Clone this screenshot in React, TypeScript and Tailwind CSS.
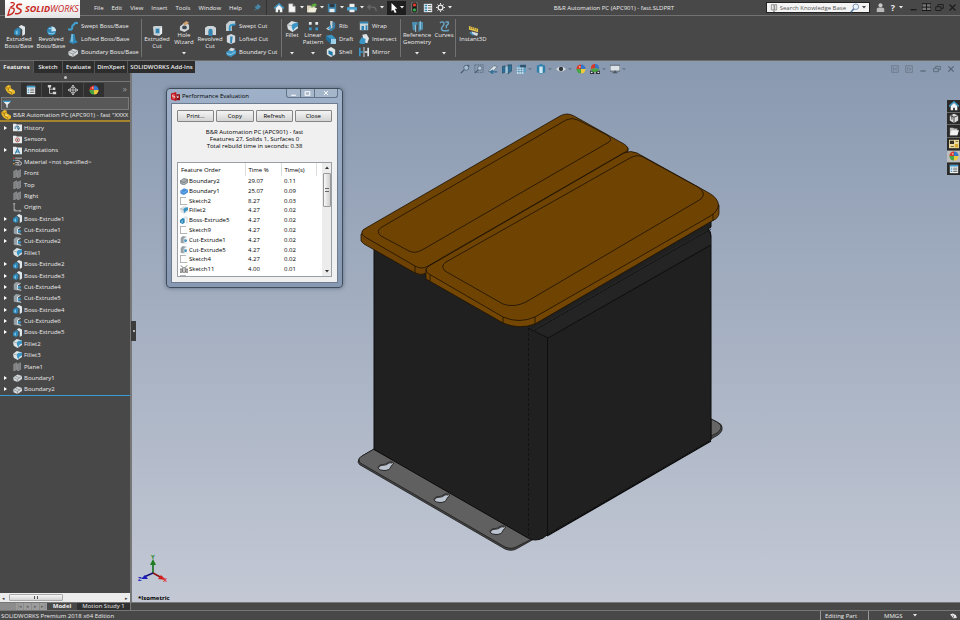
import clsx from "clsx";
import React from "react";

// small icons, all drawn on a 12x12 grid
const ICONS = {
  boss: (
    <>
      <path d="M0 6l4-3 3 1v6l-3 2-4-2z" fill="#2f86b5" />
      <path d="M5 2l3-2 4 2v8l-3 2V5z" fill="#dfe7ea" />
      <path d="M2 7l2-1v4H2z" fill="#7cc4e6" />
    </>
  ),
  revolve: (
    <>
      <circle cx="6" cy="6.500" r="5" fill="#2f86b5" />
      <path d="M6 1.500a5 5 0 0 1 5 5L6 7z" fill="#cfe3ec" />
      <path d="M2.500 8.500q3.500 2 7 0M3 4q3-1 4 1" fill="none" stroke="#8ccbe8" strokeWidth="1.200" />
    </>
  ),
  sweep: (
    <path
      d="M1 10c6 2 3-5 5-5s1-4 5-2.500"
      fill="none"
      stroke="#3f9fd0"
      strokeWidth="2.600"
      strokeLinecap="round"
    />
  ),
  loft: (
    <>
      <path d="M4 0h4l1 7 3 3-6 2-5-2 2-3z" fill="#2f86b5" />
      <path d="M4 0h2v10l-3-1z" fill="#73b9dc" />
    </>
  ),
  boundary: (
    <>
      <path d="M0 6l6-4 6 2v4l-6 4-5-2z" fill="#d4d8da" />
      <path d="M0 6l6 2.500L12 4M6 8.500V12M3 4l6 2.500" fill="none" stroke="#70797d" strokeWidth=".8" />
    </>
  ),
  boundaryGrey: (
    <>
      <path d="M0 6l6-4 6 2v4l-6 4-5-2z" fill="#a9aeb1" stroke="#565e62" strokeWidth=".8" />
      <path d="M0 6l6 2.500L12 4" fill="none" stroke="#565e62" strokeWidth=".8" />
    </>
  ),
  boundaryBlue: (
    <>
      <path d="M0 6l6-4 6 2v4l-6 4-5-2z" fill="#4a90d9" />
      <path d="M0 6l6 2.500L12 4" fill="none" stroke="#8fc0f0" strokeWidth=".8" />
    </>
  ),
  boundaryCut: (
    <>
      <path d="M0 6l6-3 6 1v4l-6 4-5-2z" fill="#3b96c6" />
      <path d="M3 4l3-3 5 1-3 3z" fill="#d6dcde" />
      <path d="M1 8l5 1 5-3" fill="none" stroke="#a6d9ef" />
    </>
  ),
  cut: (
    <>
      <path d="M1 2l2-1h8v8l-3 3-6-1z" fill="#c9d2d6" />
      <path d="M4 4h4v5H4z" fill="#2f86b5" />
      <path d="M9 4l2-2v7l-2 2z" fill="#eef2f3" />
    </>
  ),
  cutTree: (
    <>
      <path d="M1 3l3-3 6 1-3 2v8H4l-3-1z" fill="#98a2a6" />
      <path d="M10 2L6 4v6l5 1" fill="none" stroke="#d9e2e6" strokeWidth="1.300" />
      <circle cx="8.500" cy="7" r="2" fill="#3b96c6" />
    </>
  ),
  hole: (
    <>
      <path d="M1 6l5-4 5 2v5l-5 3-5-2z" fill="#cfd4d6" />
      <ellipse cx="6" cy="7" rx="2.600" ry="2" fill="#3b4a52" />
      <path d="M4 3l4-3 3 2-4 3z" fill="#d0a06c" />
    </>
  ),
  revolvedCut: (
    <>
      <path d="M0 3l3-2h6l3 2v8H8V6H4v5H0z" fill="#cdd5d9" />
      <path d="M4 5q2-2 4 0v7H4z" fill="#2f86b5" />
    </>
  ),
  sweptCut: (
    <>
      <path d="M0 4l4-4h7v4H7v8H0z" fill="#c3cbcf" />
      <path d="M4.500 12V7q0-3 7-3" fill="none" stroke="#2f9ad0" strokeWidth="2.200" />
    </>
  ),
  loftedCut: (
    <>
      <path d="M1 2l5-2 5 2v8l-5 2-5-2z" fill="#d4dadd" />
      <path d="M5 3h3l-1 8H5z" fill="#2f86b5" />
    </>
  ),
  fillet: (
    <>
      <path d="M0 4l5-4 7 2v6l-6 4-5-3z" fill="#dde3e5" />
      <path d="M5 5q1-3 7-3v4q-4 1-5 5-2-3-2-6z" fill="#3b96c6" />
      <path d="M0 4l5 1" stroke="#7d8588" strokeWidth=".7" />
    </>
  ),
  pattern: (
    <>
      <path d="M1 1h3v3H1zM8 1h3v3H8z" fill="#e5eaec" />
      <path d="M1 7h3v3H1zM8 7h3v3H8z" fill="#3b96c6" />
    </>
  ),
  rib: (
    <>
      <path d="M5 0h3v8l-5 3-3-2 5-3z" fill="#c7d0d4" />
      <path d="M6 4v5l-4 1z" fill="#2f9ad0" />
      <path d="M8 1l3 1v6l-4 4H3l5-4z" fill="#3b7fa6" />
    </>
  ),
  draft: (
    <>
      <path d="M0 2l7-1 5 5v5H6z" fill="#3b96c6" />
      <path d="M6 6h6v6H5z" fill="#9fd0e8" />
      <path d="M0 2l6 4v6L0 7z" fill="#246f9a" />
    </>
  ),
  shell: (
    <>
      <path d="M1 3l5-3 5 3v6l-5 3-5-3z" fill="#dfe5e7" />
      <path d="M3 4l5 2v5L3 8z" fill="#2279a8" />
    </>
  ),
  wrap: (
    <>
      <path d="M1 1h10v10H1z" fill="#c9d5db" />
      <path d="M1 1h10v2H1zM3 6h3v5H3zM8 5h2v6H8z" fill="#2f86b5" />
    </>
  ),
  intersect: (
    <>
      <path d="M4 1l5-1 3 5-2 6-4-1z" fill="#dfe5e7" />
      <path d="M0 10l3-6 5 2-1 6H2z" fill="#3b96c6" />
    </>
  ),
  mirror: (
    <>
      <path d="M6 0v12" stroke="#e5eaec" />
      <path d="M0 1h2v4h3v2H2v4H0z" fill="#3b96c6" />
      <path d="M12 1h-2v4H7v2h3v4h2z" fill="#dfe5e7" />
    </>
  ),
  refGeometry: (
    <>
      <path d="M0 1h6v3H4v6H1zM7 1h5v8l-5 3z" fill="#4b8fb3" />
      <path d="M4 4v8M9 0v9" stroke="#a9d2e5" />
    </>
  ),
  curves: (
    <path
      d="M1 2c4-3 6 1 3 4s-1 6 7 4M7 1h3q1 3-2 4v3"
      fill="none"
      stroke="#69a6c6"
      strokeWidth="1.600"
    />
  ),
  instant: (
    <>
      <path d="M1 1l10 3v4L1 5z" fill="#e3c44c" />
      <path d="M3 2v2M5 2.500v2M7 3v2M9 4v2" stroke="#5d501d" strokeWidth=".7" />
      <path d="M4 7l7 2-1 3-6-2z" fill="#d6dde0" />
      <path d="M2 8l4 3" stroke="#3b96c6" strokeWidth="1.500" />
    </>
  ),
  pin: <path d="M6 1l5 4-2 1-2 3-2-1-4 3 3-4-2-2 3-1z" fill="#4788aa" />,
  home: (
    <>
      <path d="M2 6v5h3V8h2v3h3V6L6 2z" fill="#f2f5f6" />
      <path d="M0 6.500L6 1l6 5.500" fill="none" stroke="#3f9fd0" strokeWidth="1.600" />
    </>
  ),
  newDoc: <path d="M2 1h5l3 3v7H2zM7 1v3h3" fill="#f4f4f4" stroke="#999" strokeWidth=".5" />,
  open: (
    <>
      <path d="M0 3h4l1 1h5v7H0z" fill="#d8d3ba" />
      <path d="M3 6h9l-2 5H1z" fill="#f1eedc" />
      <path d="M5 5q0-4 4-4V0l3 2-3 3V3.500Q7 3 7 5z" fill="#5cae3c" />
    </>
  ),
  save: (
    <>
      <path d="M1 1h10v10H1z" fill="#3c84ab" />
      <path d="M3 1h6v4H3z" fill="#2c3b45" />
      <path d="M3 7h6v4H3z" fill="#e7edf0" />
    </>
  ),
  print: (
    <>
      <path d="M3 1h6v4H3z" fill="#f1f1f1" />
      <path d="M0 5h12v4H0z" fill="#4aa3d0" />
      <path d="M3 8h6v3H3z" fill="#f1f1f1" />
    </>
  ),
  undo: <path d="M4 2L1 5l3 3M1 5h6q4 0 4 5" fill="none" stroke="#6a6a6a" strokeWidth="1.500" />,
  cursor: <path d="M3 0l7 7H7l2 4-2 1-2-4-2 2z" fill="#fff" />,
  traffic: (
    <>
      <rect x="3" y="0" width="6" height="12" rx="2" fill="#15181a" stroke="#9a9a8c" strokeWidth=".8" />
      <circle cx="6" cy="3.200" r="1.800" fill="#e03b2d" />
      <circle cx="6" cy="8.600" r="1.800" fill="#38a648" />
    </>
  ),
  options: (
    <>
      <path d="M1 1h10v10H1z" fill="#e7ecee" />
      <path d="M2 3h3M2 6h3M2 9h3" stroke="#2f86b5" strokeWidth="1.600" />
      <path d="M6 3h4M6 6h4M6 9h4" stroke="#555" />
    </>
  ),
  gear: (
    <>
      <circle cx="6" cy="6" r="3.200" fill="none" stroke="#e8e8e8" strokeWidth="1.800" />
      <path
        d="M6 0v2M6 10v2M0 6h2M10 6h2M2 2l1.300 1.300M8.700 8.700L10 10M10 2L8.700 3.300M3.300 8.700L2 10"
        stroke="#e8e8e8"
        strokeWidth="1.300"
      />
    </>
  ),
  doc: (
    <>
      <path d="M2 1h4v8H2zM7 1h3v8H7z" fill="#e8e8e8" stroke="#555" strokeWidth=".8" />
      <path d="M4 10h4l-2 2z" fill="#555" />
    </>
  ),
  zoom: (
    <>
      <circle cx="7" cy="4.500" r="3.300" fill="#eef5fb" stroke="#6285a8" />
      <path d="M4.500 7L1 11" stroke="#51749a" strokeWidth="1.800" />
    </>
  ),
  user: (
    <>
      <circle cx="6" cy="3" r="2.700" fill="#c9c9c9" />
      <path d="M1 12V8q0-2 3-2h4q3 0 3 2v4z" fill="#b9b9b9" />
    </>
  ),
  zoomFit: (
    <>
      <circle cx="7.500" cy="4.500" r="3" fill="#a9bed0" stroke="#4a6276" />
      <path d="M5 7L1 11M9 1l2 2" stroke="#465c6e" strokeWidth="1.500" />
    </>
  ),
  zoomArea: (
    <>
      <path d="M1 1h10v9H1z" fill="none" stroke="#53697c" strokeDasharray="2 1" />
      <circle cx="7" cy="5" r="2.600" fill="#b8cad8" stroke="#53697c" />
      <path d="M5 7l-4 4" stroke="#465c6e" strokeWidth="1.500" />
    </>
  ),
  prevView: (
    <>
      <path d="M0 9l7-7 4 1-4 5z" fill="#d8e0e6" stroke="#4c6274" strokeWidth=".7" />
      <path d="M2 9.500h9M3 9.500l3-2.500M3 9.500L6 12" stroke="#2e6c95" strokeWidth="1.400" fill="none" />
    </>
  ),
  section: (
    <>
      <path d="M0 3l4-1v8l-4 1zM7 1h5v7l-5 4z" fill="#2f6f96" stroke="#27424f" strokeWidth=".6" />
      <path d="M4 3h3v8H4z" fill="#9fc3d8" />
    </>
  ),
  orient: (
    <>
      <path d="M1 3l3-2h8v8l-3 3H1z" fill="#5f9cc0" />
      <path d="M1 4h8v8H1z" fill="#c6dbe7" />
      <path d="M1 6.500h8M1 9h8M3.500 4v8M6.500 4v8" stroke="#3d7da3" strokeWidth=".6" />
      <path d="M5 1h7v3H5z" fill="#31536a" />
    </>
  ),
  display: (
    <>
      <path d="M1 2l5-2 5 2v8l-5 2-5-2z" fill="#2f7fab" />
      <path d="M4 3h4v8H4z" fill="#d1e7f1" />
    </>
  ),
  eye: (
    <>
      <path d="M0 6q6-6 12 0-6 6-12 0z" fill="#d8dde1" />
      <circle cx="6" cy="6" r="2.600" fill="#30373c" />
    </>
  ),
  ball: (
    <>
      <path d="M6 6V.5A5.500 5.500 0 0 0 .5 6z" fill="#d9392b" />
      <path d="M6 6V.5A5.500 5.500 0 0 1 11.500 6z" fill="#3476c8" />
      <path d="M6 6H.5A5.500 5.500 0 0 0 6 11.500z" fill="#4aa544" />
      <path d="M6 6h5.500A5.500 5.500 0 0 1 6 11.500z" fill="#efc93c" />
      <circle cx="4.500" cy="3.500" r="1" fill="#fff" opacity=".6" />
    </>
  ),
  scene: (
    <>
      <path d="M0 8h12v4H0z" fill="#29323a" />
      <path d="M1 10h2M5 10.500h2M9 10h2" stroke="#eee" strokeWidth="1.500" />
      <path d="M6 5V0Q1 0 1 6z" fill="#d9392b" />
      <path d="M6 5V0q5 0 5 6z" fill="#3476c8" />
      <path d="M1 6l5-1 5 1q-2 4-5 4T1 6z" fill="#4aa544" />
    </>
  ),
  monitor: (
    <>
      <path d="M0 1.500h12v7H0z" fill="#dce3e8" stroke="#4c565e" />
      <path d="M5 8h2v2h2v1H3v-1h2z" fill="#4c565e" />
    </>
  ),
  part: (
    <>
      <path d="M0 3l4-3 3 1v3l5 3v3l-4 2-5-3-2-3z" fill="#e9b82c" />
      <path d="M0 3l4 1v3l4 2v3M4 4l3-2" fill="none" stroke="#94690c" strokeWidth=".8" />
      <path d="M5 6l3 1" stroke="#fff0a8" />
    </>
  ),
  list: (
    <>
      <path d="M1 1h10v10H1z" fill="#eef2f4" />
      <path d="M1 1h10v2H1z" fill="#3b96c6" />
      <path d="M2 5h2M2 7h2M2 9h2" stroke="#2f86b5" />
      <path d="M5 5h5M5 7h5M5 9h5" stroke="#444" strokeWidth=".8" />
    </>
  ),
  config: (
    <>
      <path d="M3 1v9h4M3 5h4" fill="none" stroke="#d5d5d5" />
      <path d="M1 0h4v3H1zM7 3h3v3H7zM7 8h4v3H7z" fill="#d5d5d5" />
    </>
  ),
  target: (
    <>
      <circle cx="6" cy="6" r="3.500" fill="none" stroke="#c8c8c8" />
      <path
        d="M6 0v12M0 6h12M4.500 2L6 0l1.500 2M4.500 10L6 12l1.500-2M2 4.500L0 6l2 1.500M10 4.500L12 6l-2 1.500"
        fill="none"
        stroke="#c8c8c8"
      />
    </>
  ),
  filter: (
    <>
      <path d="M0 2h12L7 7v5l-2-1V7z" fill="#e8eef1" />
      <path d="M0 1h12v2H0z" fill="#3f9fd0" />
    </>
  ),
  history: (
    <>
      <path d="M0 1h4l1 1h7v9H0z" fill="#e6e9ea" />
      <path d="M3 8a2.800 2.800 0 1 1 3 1.500M5.500 4v3h3" fill="none" stroke="#2f6f96" strokeWidth="1.200" />
    </>
  ),
  sensors: (
    <>
      <path d="M0 1h4l1 1h7v9H0z" fill="#e6e9ea" />
      <circle cx="6" cy="6.500" r="2.600" fill="none" stroke="#b23b31" />
      <circle cx="6" cy="6.500" r="1" fill="#333" />
    </>
  ),
  annotations: (
    <>
      <path d="M0 1h4l1 1h7v9H0z" fill="#e6e9ea" />
      <path d="M3 10l3-6 3 6M4 8h4" fill="none" stroke="#2c7fae" strokeWidth="1.400" />
    </>
  ),
  material: (
    <>
      <path d="M3 1.500h9M3 4.500h6M3 7.500h4M3 10.500h5" stroke="#e0e0e0" />
      <path d="M0 1.500h2" stroke="#d9392b" strokeWidth="1.500" />
      <path d="M0 4.500h2" stroke="#3b96c6" strokeWidth="1.500" />
      <path d="M0 9h2" stroke="#e0b43b" strokeWidth="1.500" />
      <circle cx="9" cy="8.500" r="2.400" fill="#55595c" stroke="#d8d8d8" />
    </>
  ),
  plane: (
    <path d="M1 3l4-2v9l-4 2zM6 3l4-2v9l-4 2z" fill="#7d7f80" stroke="#a5a7a8" strokeWidth=".7" />
  ),
  origin: <path d="M0 1h3M1.500 1v9.500H11M9.500 9v3M2 8l2 2" fill="none" stroke="#b9b9b9" strokeWidth="1.200" />,
  sketch: <path d="M11 11.500H.5V.5H9" fill="none" stroke="#7a7a7a" />,
  sketchMulti: (
    <>
      <path d="M0 11V6h3v5zM4 11V4h4v7zM9 11V6h3v5z" fill="#d9d9d9" stroke="#444" strokeWidth=".9" />
      <path d="M1 1l3 2M8 3l3-2" stroke="#444" />
    </>
  ),
  solidworks: (
    <>
      <path d="M0 2l7-2v12l-7-2z" fill="#c4161c" />
      <path d="M7 3h5v8H7z" fill="#8e1014" />
      <path d="M5 4H2v2h3v2H2M8 5l1 3 1-3" fill="none" stroke="#fff" strokeWidth=".9" />
    </>
  ),
  cube: (
    <>
      <path d="M1 3l5-2 5 2v6l-5 3-5-3z" fill="#dadada" />
      <path d="M1 3l5 2 5-2M6 5v7M3.500 2v6" fill="none" stroke="#333" />
    </>
  ),
  folder: (
    <>
      <path d="M1 2h4l1 1h4v8H1z" fill="#bcbcbc" />
      <path d="M3 5h9l-2 6H1z" fill="#f2f2f2" />
    </>
  ),
  palette: (
    <>
      <path d="M0 1h12v10H0z" fill="#ead9a0" />
      <path d="M1 2h5v4H1z" fill="#332f22" />
      <path d="M7 6h4v4H7z" fill="#d9a72a" />
      <path d="M2 9h4M8 3h3" stroke="#6b5a24" />
    </>
  ),
  collapseL: <path d="M1 1h10v10H1zM4 3v6M9 4L6 6l3 2" fill="none" stroke="#62707f" />,
  collapseR: <path d="M1 1h10v10H1zM4 3v6M6 4l3 2-3 2" fill="none" stroke="#62707f" />,
  minimize: <path d="M2 9h8" stroke="currentColor" strokeWidth="1.800" />,
  restore: <path d="M1 5h7v5H1zM4 5V2h7v5H8" fill="none" stroke="currentColor" strokeWidth="1.200" />,
  tile: <path d="M0 1h12v9H0zM6 1v9M0 5.500h12" fill="#777" stroke="#111" strokeWidth="1.200" />,
  maximize: <path d="M2 3h8v6H2z" fill="none" stroke="currentColor" strokeWidth="1.800" />,
  close: <path d="M2 2l8 8M10 2l-8 8" stroke="currentColor" strokeWidth="1.800" />,
  tag: <path d="M0 4l5 6 2-1-3-6zM4 2l6 3 2 5-6 1z" fill="#e5e5e5" />,
};

type IconName = keyof typeof ICONS;

const Icon = ({ name, className = "size-[10px]" }: { name: IconName; className?: string }) => (
  <svg viewBox="0 0 12 12" className={clsx("shrink-0", className)} aria-hidden="true">
    {ICONS[name]}
  </svg>
);

const Caret = () => (
  <svg viewBox="0 0 4 3" className="h-[3px] w-[4px] shrink-0" aria-hidden="true">
    <path d="M0 0h4L2 2.500z" fill="currentColor" />
  </svg>
);

const Separator = () => <div className="my-[3px] w-px shrink-0 bg-[#727272]" />;

type BigToolProps = { icon: IconName; lines: string[]; className: string; menu?: boolean };

const BigTool = ({ icon, lines, className, menu }: BigToolProps) => (
  <button
    className={clsx(
      "flex shrink-0 flex-col items-center leading-[7px]",
      menu ? "pt-[5px]" : "pt-[9px]",
      className,
    )}
  >
    <Icon name={icon} className="size-[11px]" />
    {lines.map((line) => (
      <span key={line} className="whitespace-nowrap">
        {line}
      </span>
    ))}
    {menu && (
      <span className="mt-auto pb-[5px]">
        <Caret />
      </span>
    )}
  </button>
);

const ToolList = ({ items, className }: { items: [IconName, string][]; className: string }) => (
  <div className={clsx("grid shrink-0 grid-rows-3 pt-[3px] pb-px", className)}>
    {items.map(([icon, label]) => (
      <button key={label} className="flex items-center gap-[3px] whitespace-nowrap">
        <Icon name={icon} />
        {label}
      </button>
    ))}
  </div>
);

const MENUS = ["File", "Edit", "View", "Insert", "Tools", "Window", "Help"];

const QUICK: { icon: IconName; menu?: boolean }[] = [
  { icon: "home" },
  { icon: "newDoc", menu: true },
  { icon: "open", menu: true },
  { icon: "save", menu: true },
  { icon: "print", menu: true },
  { icon: "undo", menu: true },
];

const TitleBar = () => (
  <header className="flex h-[16px] items-center border-b border-[#727272]">
    <div className="relative z-10 ml-[5px] flex h-[18px] w-[75px] shrink-0 items-center gap-[2px] self-start bg-linear-to-b from-white to-[#e4e4e4] pl-[2px] text-[9px] text-[#c8281f] italic">
      <svg viewBox="0 0 18 18" className="size-[16px] shrink-0" aria-hidden="true">
        <path
          d="M4 2q5-1 4 2-1 2-4 3M3 8q6-1 5 3-1 4-7 5l2-7"
          fill="none"
          stroke="#c8281f"
          strokeWidth="1.500"
        />
        <path d="M17 4q-6-1-6 2 0 2 3 3t1 4q-2 2-6 1" fill="none" stroke="#c8281f" strokeWidth="1.800" />
      </svg>
      <span>
        <b>SOLID</b>WORKS
      </span>
    </div>
    <nav className="flex items-center gap-[8px] pl-[14px]">
      {MENUS.map((menu) => (
        <button key={menu}>{menu}</button>
      ))}
      <button aria-label="Pin menu" className="pr-[2px] pl-[3px]">
        <Icon name="pin" className="size-[9px]" />
      </button>
    </nav>
    <div className="ml-[2px] flex h-full items-center gap-[3px] border-l border-[#333] pl-[7px]">
      {QUICK.map(({ icon, menu }) => (
        <button key={icon} aria-label={icon} className="flex items-center gap-[3px]">
          <Icon name={icon} />
          {menu && <Caret />}
        </button>
      ))}
      <button aria-label="Select" className="flex h-[14px] items-center gap-px bg-[#1e1e1e] px-[2px]">
        <Icon name="cursor" />
        <Caret />
      </button>
      <button aria-label="Rebuild">
        <Icon name="traffic" className="size-[11px]" />
      </button>
      <button aria-label="File properties">
        <Icon name="options" />
      </button>
      <button aria-label="Options" className="flex items-center gap-[3px]">
        <Icon name="gear" className="size-[9px]" />
        <Caret />
      </button>
    </div>
    <h1 className="flex-1 pl-[10px] text-center whitespace-pre">B&amp;R Automation PC (APC901) - fast.SLDPRT</h1>
    <div className="ml-auto flex items-center gap-[6px] pr-[3px]">
      <div className="flex h-[11px] w-[104px] items-center border border-[#222] bg-[#f4f4f4] px-[3px] text-[#444]">
        <Icon name="doc" className="size-[8px]" />
        <input
          aria-label="Search Knowledge Base"
          placeholder="Search Knowledge Base"
          className="min-w-0 flex-1 pl-[2px] placeholder:text-[#555]"
        />
        <Icon name="zoom" />
        <span className="pl-[2px]">
          <Caret />
        </span>
      </div>
      <button aria-label="Log in">
        <Icon name="user" className="size-[9px]" />
      </button>
      <button aria-label="Help" className="flex items-center gap-[4px] text-[9px] font-bold">
        ?<Caret />
      </button>
      <div className="flex gap-[4px] text-[#1c1c1c]">
        {(["minimize", "tile", "restore", "close"] as IconName[]).map((icon) => (
          <button key={icon} aria-label={icon}>
            <Icon name={icon} className="size-[9px]" />
          </button>
        ))}
      </div>
    </div>
  </header>
);

const Ribbon = () => (
  <div className="flex h-[45px] border-b border-[#6c6c6c] pl-[3px]">
    <BigTool icon="boss" lines={["Extruded", "Boss/Base"]} className="w-[32px]" />
    <BigTool icon="revolve" lines={["Revolved", "Boss/Base"]} className="w-[32px]" />
    <ToolList
      className="w-[74px] pl-[1px]"
      items={[
        ["sweep", "Swept Boss/Base"],
        ["loft", "Lofted Boss/Base"],
        ["boundary", "Boundary Boss/Base"],
      ]}
    />
    <Separator />
    <BigTool icon="cut" lines={["Extruded", "Cut"]} className="w-[30px]" />
    <BigTool icon="hole" lines={["Hole", "Wizard"]} className="w-[24px]" menu />
    <BigTool icon="revolvedCut" lines={["Revolved", "Cut"]} className="w-[28px]" />
    <ToolList
      className="w-[57px] pl-[2px]"
      items={[
        ["sweptCut", "Swept Cut"],
        ["loftedCut", "Lofted Cut"],
        ["boundaryCut", "Boundary Cut"],
      ]}
    />
    <Separator />
    <BigTool icon="fillet" lines={["Fillet"]} className="w-[20px]" menu />
    <BigTool icon="pattern" lines={["Linear", "Pattern"]} className="w-[22px]" menu />
    <ToolList
      className="w-[33px] pl-[2px]"
      items={[
        ["rib", "Rib"],
        ["draft", "Draft"],
        ["shell", "Shell"],
      ]}
    />
    <ToolList
      className="w-[43px] pl-[2px]"
      items={[
        ["wrap", "Wrap"],
        ["intersect", "Intersect"],
        ["mirror", "Mirror"],
      ]}
    />
    <Separator />
    <BigTool icon="refGeometry" lines={["Reference", "Geometry"]} className="w-[32px]" menu />
    <BigTool icon="curves" lines={["Curves"]} className="w-[22px]" menu />
    <Separator />
    <BigTool icon="instant" lines={["Instant3D"]} className="w-[34px]" />
  </div>
);

const VIEW_TOOLS: { icon: IconName; menu?: boolean }[] = [
  { icon: "zoomFit" },
  { icon: "zoomArea" },
  { icon: "prevView" },
  { icon: "section" },
  { icon: "orient", menu: true },
  { icon: "display", menu: true },
  { icon: "eye", menu: true },
  { icon: "ball" },
  { icon: "scene", menu: true },
  { icon: "monitor", menu: true },
];

const CommandTabs = () => (
  <div className="flex h-[12px] items-start font-semibold">
    <div className="flex h-[12px] gap-px bg-[#555]">
      <button className="w-[33px] bg-[#484848] font-bold">Features</button>
      <button className="w-[28px] bg-[#2d2d2d]">Sketch</button>
      <button className="w-[31px] bg-[#2d2d2d]">Evaluate</button>
      <button className="w-[32px] bg-[#2d2d2d]">DimXpert</button>
      <button className="w-[67px] bg-[#2d2d2d]">SOLIDWORKS Add-Ins</button>
    </div>
    <div className="flex flex-1 items-center justify-center gap-[4px] pt-[3px] text-[#6d7c8e]">
      {VIEW_TOOLS.map(({ icon, menu }) => (
        <button key={icon} aria-label={icon} className="flex items-center gap-[2px]">
          <Icon name={icon} />
          {menu && <Caret />}
        </button>
      ))}
    </div>
    <div className="flex gap-[6px] pt-[4px] pr-[5px] text-[#566474]">
      {(["collapseL", "collapseR", "minimize", "restore", "close"] as IconName[]).map((icon) => (
        <button key={icon} aria-label={icon}>
          <Icon name={icon} className="size-[8px]" />
        </button>
      ))}
    </div>
  </div>
);

const TREE: { icon: IconName; label: string; open?: boolean }[] = [
  { icon: "history", label: "History", open: true },
  { icon: "sensors", label: "Sensors" },
  { icon: "annotations", label: "Annotations", open: true },
  { icon: "material", label: "Material <not specified>" },
  { icon: "plane", label: "Front" },
  { icon: "plane", label: "Top" },
  { icon: "plane", label: "Right" },
  { icon: "origin", label: "Origin" },
  { icon: "boss", label: "Boss-Extrude1", open: true },
  { icon: "cutTree", label: "Cut-Extrude1", open: true },
  { icon: "cutTree", label: "Cut-Extrude2", open: true },
  { icon: "fillet", label: "Fillet1" },
  { icon: "boss", label: "Boss-Extrude2", open: true },
  { icon: "boss", label: "Boss-Extrude3", open: true },
  { icon: "cutTree", label: "Cut-Extrude4", open: true },
  { icon: "cutTree", label: "Cut-Extrude5", open: true },
  { icon: "boss", label: "Boss-Extrude4", open: true },
  { icon: "cutTree", label: "Cut-Extrude6", open: true },
  { icon: "boss", label: "Boss-Extrude5", open: true },
  { icon: "fillet", label: "Fillet2" },
  { icon: "fillet", label: "Fillet3" },
  { icon: "plane", label: "Plane1" },
  { icon: "boundary", label: "Boundary1", open: true },
  { icon: "boundary", label: "Boundary2", open: true },
];

const FeatureTree = () => (
  <aside className="relative flex w-[132px] shrink-0 flex-col border-r-2 border-[#777] bg-[#484848]">
    <div className="flex h-[9px] items-center justify-center border-b border-[#777]">
      <span className="size-[3px] rounded-full bg-[#c4c4c4]" />
    </div>
    <div className="flex h-[15px] shrink-0 items-stretch gap-px pt-px">
      {(["part", "list", "config", "target", "ball"] as IconName[]).map((icon, i) => (
        <button
          key={icon}
          aria-label={icon}
          className={clsx("flex w-[20px] items-center justify-center", i > 0 && "bg-[#303030]")}
        >
          <Icon name={icon} />
        </button>
      ))}
      <span className="ml-auto pr-[3px] text-[9px] leading-[12px] text-[#999]">»</span>
    </div>
    <label className="mx-px flex h-[13px] shrink-0 items-center border border-[#7c7c7c] bg-[#585858] pl-px">
      <Icon name="filter" className="size-[8px]" />
      <input aria-label="Filter features" className="min-w-0 flex-1" />
    </label>
    <div className="flex h-[12px] shrink-0 items-center gap-[2px] overflow-hidden border-b-2 border-[#a5842f] pl-[1px] whitespace-nowrap">
      <Icon name="part" />
      B&amp;R Automation PC (APC901) - fast "XXXX
    </div>
    <ul className="grid h-[273px] shrink-0 auto-rows-fr">
      {TREE.map(({ icon, label, open }) => (
        <li key={label} className="flex items-center whitespace-nowrap">
          <span className="flex w-[13px] shrink-0 pl-[4px]">
            {open && (
              <svg viewBox="0 0 3 4" className="h-[4px] w-[3px]" aria-hidden="true">
                <path d="M0 0l3 2-3 2z" fill="#fff" />
              </svg>
            )}
          </span>
          <Icon name={icon} className="size-[9px]" />
          <span className="pl-[2px]">{label}</span>
        </li>
      ))}
    </ul>
    <div className="h-px shrink-0 bg-[#3a9ad4]" />
    <div className="mt-auto flex h-[9px] shrink-0 items-center justify-between bg-[#ececec] px-[2px] text-[5px] text-[#444]">
      <span>◂</span>
      <div className="mr-auto ml-[4px] flex h-[7px] w-[54px] items-center justify-center rounded-[1px] border border-[#aaa] bg-linear-to-b from-[#f7f7f7] to-[#d2d2d2]">
        <span className="h-[3px] w-[4px] border-x border-[#555]" />
      </div>
      <span>▸</span>
    </div>
    {/* splitter handle */}
    <div className="absolute top-[248px] -right-[6px] z-10 flex h-[20px] w-[5px] items-center justify-center bg-[#3c3c3c]">
      <span className="size-[2px] rounded-full bg-[#ddd]" />
    </div>
  </aside>
);

const Keyhole = ({ x, y }: { x: number; y: number }) => (
  <g transform={`translate(${x} ${y})`}>
    <path
      d="M-7 0q0-3 5-3.500q3 0 4-1.500q2-1.500 5-1q3 1 1 2.500q-2 1-2 2q-1 4-7 4q-5 0-6-2.500z"
      fill="#bcc4d0"
      stroke="#1a1a1a"
      strokeWidth=".9"
    />
    <path d="M-6.500-.5q1-2.500 5-2.300q3 0 4-1.500q2-1.500 5-.7" fill="none" stroke="#3a3a3a" strokeWidth="1.300" />
  </g>
);

const Model = () => (
  <svg viewBox="132 73 828 529" className="min-h-0 min-w-0 flex-1" role="img" aria-label="Isometric part view">
    {/* mounting flanges */}
    <g stroke="#1b1b1b" strokeWidth=".8">
      <path d="M711 419l6 3q5 2 5 5v3q-1 3-4 5l-7 4z" fill="#4a4a4a" />
      <path d="M711 419l6 3q5 3 4 6q-1 3-4 5l-6 3z" fill="#666" />
      <path d="M374 449l-12 7q-4 3-4 6q1 3 4 4l143 83q7 3 13-1l16-9z" fill="#474747" />
      <path d="M374 449l-12 7q-4 2-3 4q0 3 3 4l143 83q7 3 13-1l16-8z" fill="#606060" />
    </g>
    <Keyhole x={385} y={468} />
    <Keyhole x={441} y={500} />
    <Keyhole x={497} y={532} />
    {/* housing */}
    <path
      d="M374 240V449.500L528 538q7 4 15 0l4-3L711 440V236q0-5-3-7l3-2v-12L560 230z"
      fill="#202020"
      stroke="#0c0c0c"
    />
    <path d="M530 330L706 229q4 2 5 15L548 338z" fill="#242424" />
    <g fill="none" stroke="#0a0a0a" strokeWidth=".8">
      <path d="M547.500 338V535" />
      <path d="M528.500 328V538" strokeWidth=".6" strokeDasharray="3 2" />
      <path d="M528 328l20 10L711 245" />
      <path d="M535 330L711 229" strokeDasharray="2 1" />
      <path d="M547 536L711 441" stroke="#050505" strokeWidth="1.400" />
    </g>
    {/* cooling covers */}
    <g stroke="#1c1202" strokeWidth=".8">
      <path d="M361 234v7l3 3 51 29q6 3 12 0l201-121v-4z" fill="#6e4205" />
      <path d="M366 228L560 116q7-4 14 0l50 28q6 4 3 7L428 266q-6 4-13 0l-50-29q-7-5 1-9z" fill="#6f4302" />
      <path
        d="M382 227L566 120q6-3 12 0l29 15q6 4 2 7L422 250q-7 4-13 1l-28-15q-6-5 1-9z"
        fill="none"
      />
      <path d="M426 269v10l77 44q16 7 32 1L712 221q7-3 7-8v-8L640 160z" fill="#734603" />
      <path
        d="M429 266L624 153q7-3 13 0l72 40q9 5 9.500 12q-.5 6-8 11L535 317q-16 7-32 0l-74-43q-6-4 0-8z"
        fill="#6f4302"
      />
      <path
        d="M446 262L630 158q7-4 13-1l55 30q9 6 3 12L526 302q-12 6-23 2l-58-33q-5-5 1-9z"
        fill="none"
      />
      <path d="M415 266v7M503 317v6M535 317v7M713 214v7M430 275v6" />
    </g>
    {/* axis triad */}
    <g strokeWidth="1.600" fontSize="6" fontWeight="700">
      <path d="M153 573V562" stroke="#11701b" />
      <path d="M150 565l3-6 3 6z" fill="#1c7d20" />
      <path d="M153 573l9 5" stroke="#8d1212" />
      <path d="M158 579l3-4 5 5z" fill="#d0201f" />
      <path d="M153 573l-9 4" stroke="#14147a" />
      <path d="M148 579l-3-4-4 4z" fill="#1b1bc0" />
      <text x="151" y="559" fill="#2c8b2c">Y</text>
      <text x="163" y="582" fill="#d33">X</text>
      <text x="138" y="581" fill="#22b">Z</text>
      <text x="138" y="600" fill="#000">*Isometric</text>
    </g>
  </svg>
);

const TASK_TABS: IconName[] = ["home", "cube", "folder", "palette", "ball", "list"];

const TaskPane = () => (
  <div className="absolute top-[27px] right-0 grid h-[75px] w-[13px] auto-rows-fr gap-px bg-[#666]">
    {TASK_TABS.map((icon) => (
      <button
        key={icon}
        aria-label={icon}
        className={clsx("flex items-center justify-center", icon === "ball" ? "bg-[#bdbdbd]" : "bg-[#2a2a2a]")}
      >
        <Icon name={icon} className="size-[10px]" />
      </button>
    ))}
  </div>
);

const FEATURES: [IconName, string, string, string][] = [
  ["boundaryGrey", "Boundary2", "29.07", "0.11"],
  ["boundaryBlue", "Boundary1", "25.07", "0.09"],
  ["sketch", "Sketch2", "8.27", "0.03"],
  ["fillet", "Fillet2", "4.27", "0.02"],
  ["boss", "Boss-Extrude5", "4.27", "0.02"],
  ["sketch", "Sketch9", "4.27", "0.02"],
  ["cutTree", "Cut-Extrude1", "4.27", "0.02"],
  ["cutTree", "Cut-Extrude5", "4.27", "0.02"],
  ["sketch", "Sketch4", "4.27", "0.02"],
  ["sketchMulti", "Sketch11", "4.00", "0.01"],
];

const PerformanceDialog = () => (
  <section
    role="dialog"
    aria-label="Performance Evaluation"
    className="absolute top-[15px] left-[166px] flex h-[200px] w-[177px] flex-col rounded-[4px] border border-[#3f4c5c] bg-linear-to-b from-[#9fb1c8] to-[#8799b2] px-[4px] pb-[4px] text-black shadow-[0_0_4px_#5c6a7c]"
  >
    <div className="flex h-[14px] shrink-0 items-center gap-[2px]">
      <Icon name="solidworks" className="size-[9px]" />
      <h2>Performance Evaluation</h2>
      <div className="ml-auto flex h-[9px] self-start rounded-b-[3px] border border-t-0 border-[#64748a] bg-[#a5b5ca] text-white">
        <button aria-label="Minimize" className="flex w-[14px] items-center justify-center border-r border-[#64748a]">
          <Icon name="minimize" className="size-[7px]" />
        </button>
        <button aria-label="Maximize" className="flex w-[14px] items-center justify-center border-r border-[#64748a]">
          <Icon name="maximize" className="size-[7px]" />
        </button>
        <button aria-label="Close window" className="flex w-[22px] items-center justify-center">
          <Icon name="close" className="size-[6px]" />
        </button>
      </div>
    </div>
    <div className="flex min-h-0 flex-1 flex-col border border-[#6d7c90] bg-[#f0f0f0] px-[5px] pt-[6px] pb-[5px]">
      <div className="grid grid-cols-4 gap-[2px]">
        {["Print...", "Copy", "Refresh", "Close"].map((label) => (
          <button
            key={label}
            className="h-[12px] rounded-[1px] border border-[#858585] bg-linear-to-b from-[#f4f4f4] to-[#d4d4d4]"
          >
            {label}
          </button>
        ))}
      </div>
      <p className="pt-[7px] text-center leading-[7px]">
        B&amp;R Automation PC (APC901) - fast
        <br />
        Features 27, Solids 1, Surfaces 0
        <br />
        Total rebuild time in seconds: 0.38
      </p>
      <div className="mt-auto flex h-[115px] border border-[#9a9fa6] bg-white">
        <div className="min-w-0 flex-1 overflow-hidden">
          <table className="h-[121px] w-full table-fixed border-collapse text-left">
            <thead>
              <tr className="h-[13px]">
                <th className="w-[67px] border-r border-[#ddd] pl-[3px] font-normal">Feature Order</th>
                <th className="w-[36px] border-r border-[#ddd] pl-[3px] font-normal">Time %</th>
                <th className="border-r border-[#ddd] pl-[3px] font-normal">Time(s)</th>
                <th className="w-[6px]" />
              </tr>
            </thead>
            <tbody>
              {FEATURES.map(([icon, name, percent, seconds]) => (
                <tr key={name}>
                  <td className="p-0 pl-[2px]">
                    <div className="flex items-center gap-px whitespace-nowrap">
                      <Icon name={icon} className="size-[8px]" />
                      {name}
                    </div>
                  </td>
                  <td className="p-0 pl-[3px]">{percent}</td>
                  <td className="p-0 pl-[3px]">{seconds}</td>
                  <td className="p-0" />
                </tr>
              ))}
              <tr>
                <td className="p-0 pl-[2px]">
                  <Icon name="sketch" className="size-[8px]" />
                </td>
              </tr>
            </tbody>
          </table>
        </div>
        <div className="flex w-[9px] flex-col items-center bg-[#ececec] text-[#333]">
          <span className="flex h-[10px] rotate-180 items-center">
            <Caret />
          </span>
          <div className="flex h-[34px] w-[8px] items-center justify-center rounded-[1px] border border-[#999] bg-linear-to-r from-[#f7f7f7] to-[#d0d0d0]">
            <span className="h-[4px] w-[4px] border-y border-[#666]" />
          </div>
          <span className="mt-auto flex h-[10px] items-center">
            <Caret />
          </span>
        </div>
      </div>
    </div>
  </section>
);

const Footer = () => (
  <footer>
    <div className="flex h-[8px] items-stretch border-t border-[#777] leading-[7px]">
      <div className="flex w-[47px] items-center justify-end gap-[1px] bg-[#8c8c8c] text-[5px] text-[#666]">
        {["|◂", "◂", "▸", "▸|"].map((label) => (
          <button key={label} className="w-[7px] bg-[#9c9c9c]">
            {label}
          </button>
        ))}
      </div>
      <button className="w-[30px] font-bold">Model</button>
      <button className="w-[54px] border-r border-[#777] bg-[#303030]">Motion Study 1</button>
    </div>
    <div className="flex h-[10px] items-center border-t border-[#777] pl-[1px]">
      <span>SOLIDWORKS Premium 2018 x64 Edition</span>
      <div className="ml-auto flex h-[9px] items-center">
        <span className="flex h-full w-[48px] items-center border-l border-[#999] pl-[4px]">Editing Part</span>
        <span className="flex h-full w-[42px] items-center border-l border-[#999] pl-[15px]">MMGS</span>
        <span className="flex w-[40px] items-center pl-[3px]">
          <Caret />
        </span>
        <Icon name="tag" className="mr-[3px] size-[7px]" />
      </div>
    </div>
  </footer>
);

const App = () => (
  <div className="flex h-screen flex-col overflow-hidden bg-[#484848] font-['Open_Sans','Noto_Sans',sans-serif] text-[6px] leading-[8px] text-[#ececec]">
    <TitleBar />
    <Ribbon />
    <main className="flex min-h-0 flex-1 flex-col bg-linear-to-b from-[#8999b0] to-[#c3c8d4]">
      <CommandTabs />
      <div className="relative flex min-h-0 flex-1">
        <FeatureTree />
        <Model />
        <TaskPane />
        <PerformanceDialog />
      </div>
    </main>
    <Footer />
  </div>
);

export default App;
